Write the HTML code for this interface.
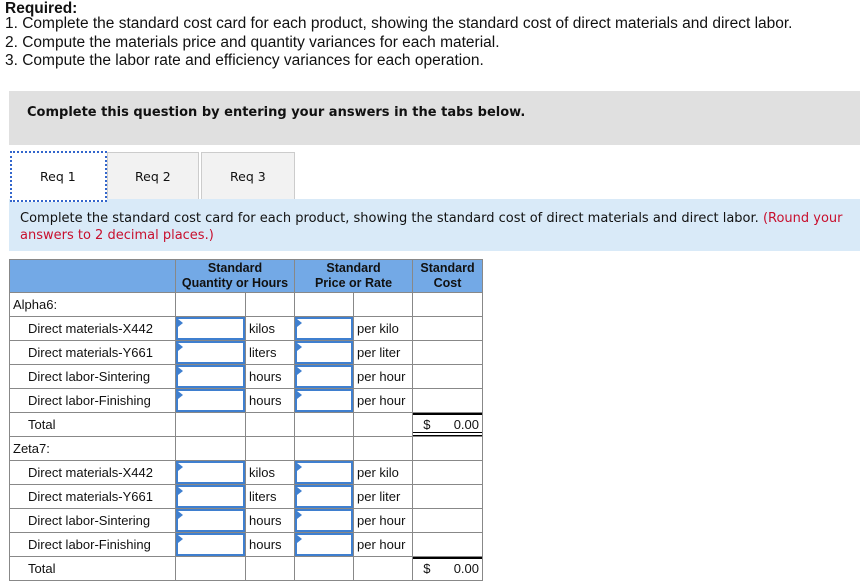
<!DOCTYPE html>
<html><head><style>
body{margin:0;width:863px;height:575px;overflow:hidden;background:#fff;font-family:"Liberation Sans",sans-serif;color:#111;position:relative}
.a{position:absolute;white-space:nowrap}
.req{left:5px;font-size:15.5px;line-height:18px}
.v{font-family:"DejaVu Sans",Verdana,sans-serif}
table{position:absolute;left:9px;top:259px;border-collapse:collapse;font-size:13px;table-layout:fixed}
td{border:1px solid #888;height:23px;padding:0 3px;white-space:nowrap;line-height:16px}
th{background:#73a9e6;border:1px solid #888;font-size:12.5px;line-height:15px;height:32px;padding:0;color:#111}
td.in{padding:0}
.in div{height:23px;box-sizing:border-box;border:2px solid #3f7fcf;position:relative}
.in div:before{content:"";position:absolute;left:0;top:0;border-left:5px solid #3f7fcf;border-top:4px solid transparent;border-bottom:4px solid transparent}
.ind{padding-left:18px}
.t1{background:linear-gradient(#000,#000) top/100% 2px no-repeat,linear-gradient(#000,#000) bottom/100% 1px no-repeat,linear-gradient(#000,#000) 0 calc(100% - 3px)/100% 1px no-repeat}
.t2{background:linear-gradient(#000,#000) top/100% 2px no-repeat}
</style></head><body>
<div class="a req" style="top:0px;font-weight:bold">Required:</div>
<div class="a req" style="top:15px">1. Complete the standard cost card for each product, showing the standard cost of direct materials and direct labor.</div>
<div class="a req" style="top:34px">2. Compute the materials price and quantity variances for each material.</div>
<div class="a req" style="top:52px">3. Compute the labor rate and efficiency variances for each operation.</div>
<div class="a" style="left:9px;top:91px;width:851px;height:54px;background:#e0e0e0"></div>
<div class="a v" style="left:27px;top:104px;font-size:13px;font-weight:bold;line-height:18px">Complete this question by entering your answers in the tabs below.</div>
<div class="a" style="left:107px;top:152px;width:90px;height:46px;background:#f2f2f2;border:1px solid #ccc;border-bottom:none"></div>
<div class="a" style="left:201px;top:152px;width:92px;height:46px;background:#f2f2f2;border:1px solid #ccc;border-bottom:none"></div>
<div class="a" style="left:9px;top:199px;width:851px;height:52px;background:#d9eaf8"></div>
<div class="a" style="left:10px;top:151px;width:93px;height:47px;background:#fff;border:2px dotted #3366cc"></div>
<div class="a v" style="left:40px;top:169px;font-size:12.5px">Req 1</div>
<div class="a v" style="left:135px;top:169px;font-size:12.5px">Req 2</div>
<div class="a v" style="left:230px;top:169px;font-size:12.5px">Req 3</div>
<div class="a v" style="left:20px;top:210px;font-size:13px;line-height:17px">Complete the standard cost card for each product, showing the standard cost of direct materials and direct labor. <span style="color:#c8102e">(Round your</span><br><span style="color:#c8102e">answers to 2 decimal places.)</span></div>
<table>
<colgroup><col style="width:166px"><col style="width:70px"><col style="width:49px"><col style="width:59px"><col style="width:59px"><col style="width:70px"></colgroup>
<tr><th></th><th colspan="2">Standard<br>Quantity or Hours</th><th colspan="2">Standard<br>Price or Rate</th><th>Standard<br>Cost</th></tr>
<tr><td>Alpha6:</td><td></td><td></td><td></td><td></td><td></td></tr>
<tr><td class="ind">Direct materials-X442</td><td class="in"><div></div></td><td>kilos</td><td class="in"><div></div></td><td>per kilo</td><td></td></tr>
<tr><td class="ind">Direct materials-Y661</td><td class="in"><div></div></td><td>liters</td><td class="in"><div></div></td><td>per liter</td><td></td></tr>
<tr><td class="ind">Direct labor-Sintering</td><td class="in"><div></div></td><td>hours</td><td class="in"><div></div></td><td>per hour</td><td></td></tr>
<tr><td class="ind">Direct labor-Finishing</td><td class="in"><div></div></td><td>hours</td><td class="in"><div></div></td><td>per hour</td><td></td></tr>
<tr><td class="ind">Total</td><td></td><td></td><td></td><td></td><td class="t1">&nbsp;&nbsp;$<span style="float:right">0.00</span></td></tr>
<tr><td>Zeta7:</td><td></td><td></td><td></td><td></td><td></td></tr>
<tr><td class="ind">Direct materials-X442</td><td class="in"><div></div></td><td>kilos</td><td class="in"><div></div></td><td>per kilo</td><td></td></tr>
<tr><td class="ind">Direct materials-Y661</td><td class="in"><div></div></td><td>liters</td><td class="in"><div></div></td><td>per liter</td><td></td></tr>
<tr><td class="ind">Direct labor-Sintering</td><td class="in"><div></div></td><td>hours</td><td class="in"><div></div></td><td>per hour</td><td></td></tr>
<tr><td class="ind">Direct labor-Finishing</td><td class="in"><div></div></td><td>hours</td><td class="in"><div></div></td><td>per hour</td><td></td></tr>
<tr><td class="ind">Total</td><td></td><td></td><td></td><td></td><td class="t2">&nbsp;&nbsp;$<span style="float:right">0.00</span></td></tr>
</table>
</body></html>
